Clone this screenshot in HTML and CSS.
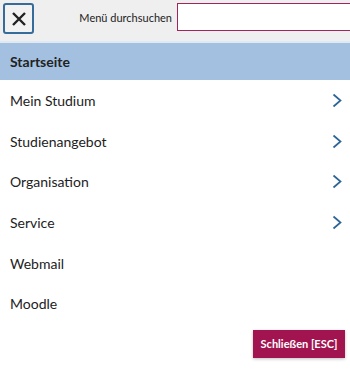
FILE: index.html
```html
<!DOCTYPE html>
<html lang="de">
<head>
  <meta charset="UTF-8" />
  <title>Menü</title>
  <meta name="viewport" content="width=device-width, initial-scale=1.0" />
  <link rel="stylesheet" href="styles.css">
</head>
<body>
<div class="menu">
  <div class="menu-head">
    <button class="close-x" title="Menü schließen">
      <svg width="16" height="16" viewBox="0 0 16 16"><path d="M2 2 L14 14 M14 2 L2 14" stroke="#222" stroke-width="2.4" fill="none"/></svg>
    </button>
    <label class="search-label" for="menuSearch">Menü durchsuchen</label>
    <input class="search-input" id="menuSearch" type="text" />
  </div>
  <ul class="nav">
    <li class="nav-item active"><span>Startseite</span></li>
    <li class="nav-item"><span>Mein Studium</span><svg class="chev" width="10" height="15" viewBox="0 0 10 15"><path d="M1.5 1.5 L8.5 7.5 L1.5 13.5" stroke="#2c6496" stroke-width="1.7" fill="none"/></svg></li>
    <li class="nav-item"><span>Studienangebot</span><svg class="chev" width="10" height="15" viewBox="0 0 10 15"><path d="M1.5 1.5 L8.5 7.5 L1.5 13.5" stroke="#2c6496" stroke-width="1.7" fill="none"/></svg></li>
    <li class="nav-item"><span>Organisation</span><svg class="chev" width="10" height="15" viewBox="0 0 10 15"><path d="M1.5 1.5 L8.5 7.5 L1.5 13.5" stroke="#2c6496" stroke-width="1.7" fill="none"/></svg></li>
    <li class="nav-item"><span>Service</span><svg class="chev" width="10" height="15" viewBox="0 0 10 15"><path d="M1.5 1.5 L8.5 7.5 L1.5 13.5" stroke="#2c6496" stroke-width="1.7" fill="none"/></svg></li>
    <li class="nav-item"><span>Webmail</span></li>
    <li class="nav-item"><span>Moodle</span></li>
  </ul>
  <div class="menu-foot">
    <button class="close-btn">Schließen [ESC]</button>
  </div>
</div>
</body>
</html>
```
FILE: styles.css
```css
html, body {
  margin: 0;
  padding: 0;
  background: #fff;
  color: #222;
  font-family: Lato, "Noto Sans", sans-serif;
}
.menu {
  width: 350px;
  height: 369px;
  overflow: hidden;
}
.menu-head {
  display: flex;
  align-items: flex-start;
  background: #efefef;
  height: 43px;
  padding: 3px 0 0 3px;
  box-sizing: border-box;
  border-bottom: 2px solid #dfe9f4;
}
.close-x {
  width: 31px;
  height: 31px;
  border: 2px solid #356c9b;
  border-radius: 3px;
  background: #f2f2f2;
  display: flex;
  align-items: center;
  justify-content: center;
  padding: 0;
  cursor: pointer;
  flex: none;
}
.search-label {
  flex: 1;
  text-align: right;
  white-space: nowrap;
  font-size: 11px;
  margin: 8px 5px 0 0;
  color: #222;
}
.search-input {
  flex: none;
  width: 173px;
  height: 28px;
  box-sizing: border-box;
  border: 1px solid #a3245a;
  border-right: none;
  background: #fff;
  margin: 0;
  padding: 0 6px;
}
.nav {
  list-style: none;
  margin: 0;
  padding: 0;
}
.nav-item {
  height: 40.6px;
  display: flex;
  align-items: center;
  justify-content: space-between;
  padding: 0 8px 0 10px;
  font-size: 14px;
  padding-top: 1px;
  box-sizing: border-box;
}
.nav-item.active {
  background: #a3c0e1;
  height: 37px;
  font-weight: 700;
  padding-top: 0;
}
.chev {
  display: block;
}
.menu-foot {
  display: flex;
  justify-content: flex-end;
  padding: 6px 5px 0 0;
}
.close-btn {
  background: #a2144f;
  color: #fff;
  border: none;
  font-family: Lato, sans-serif;
  font-size: 11px;
  font-weight: 700;
  width: 92px;
  height: 28px;
  padding: 0;
  cursor: pointer;
  box-shadow: 0 1px 3px rgba(0,0,0,0.25);
}
```
